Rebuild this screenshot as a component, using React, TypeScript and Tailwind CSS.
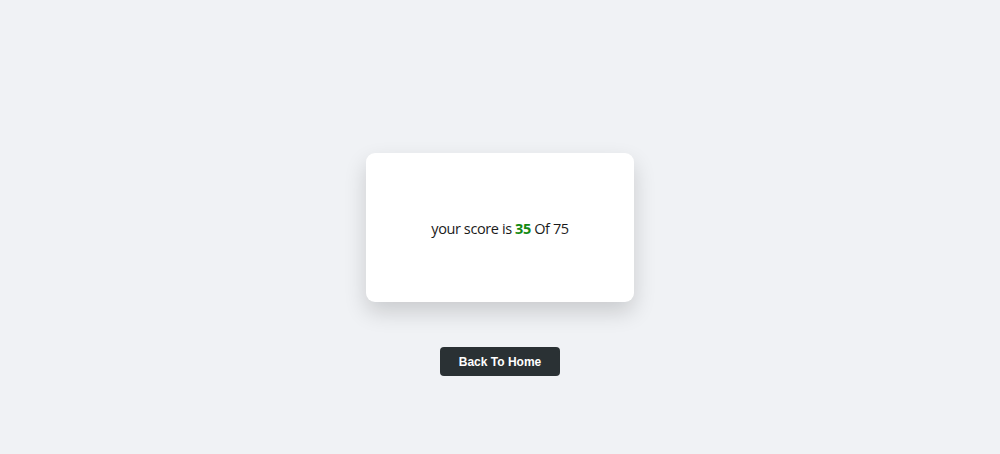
export default function App() {
  return (
    <div className="min-h-screen w-full bg-[#f0f2f5] flex flex-col items-center pt-[153px]">
      <div className="w-[268px] h-[149px] bg-white rounded-[9px] shadow-[0_10px_22px_rgba(0,0,0,0.16)] flex items-center justify-center">
        <p className="text-[14.5px] text-[#1a1a1a] font-['Open_Sans',sans-serif] tracking-[-0.4px] mt-[3px]">
          your score is <span className="font-bold text-[#138a13]">35</span> Of 75
        </p>
      </div>
      <button className="mt-[45px] w-[120px] h-[29px] rounded-[4px] bg-[#2a3134] text-white text-[12px] font-bold font-['Liberation_Sans',Arial,sans-serif]">
        Back To Home
      </button>
    </div>
  )
}
